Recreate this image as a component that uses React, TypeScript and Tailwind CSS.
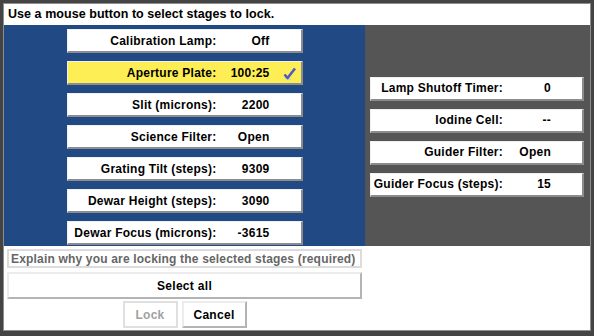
const font = { fontFamily: '"Liberation Sans", Arial, sans-serif' };

type Stage = { label: string; value: string; selected?: boolean };

const leftStages: Stage[] = [
  { label: 'Calibration Lamp:', value: 'Off' },
  { label: 'Aperture Plate:', value: '100:25', selected: true },
  { label: 'Slit (microns):', value: '2200' },
  { label: 'Science Filter:', value: 'Open' },
  { label: 'Grating Tilt (steps):', value: '9309' },
  { label: 'Dewar Height (steps):', value: '3090' },
  { label: 'Dewar Focus (microns):', value: '-3615' },
];

const rightStages: Stage[] = [
  { label: 'Lamp Shutoff Timer:', value: '0' },
  { label: 'Iodine Cell:', value: '--' },
  { label: 'Guider Filter:', value: 'Open' },
  { label: 'Guider Focus (steps):', value: '15' },
];

function Check() {
  return (
    <svg width="14" height="14" viewBox="0 0 14 14" className="absolute right-[4px] top-[5px]">
      <path d="M2 10.5 L8 12.5" stroke="#c8c8e0" strokeWidth="1.5" fill="none" />
      <path d="M1.5 7.5 L4.5 11 L12 1.5" stroke="#4b5cc4" strokeWidth="2.6" fill="none" strokeLinejoin="round" />
    </svg>
  );
}

function StageButton({ stage, wide }: { stage: Stage; wide: boolean }) {
  return (
    <div
      className={
        'relative flex h-[24px] items-center border-t border-l border-r-2 border-b-2 border-t-[#f0f0f0] border-l-[#f0f0f0] border-r-[#8c8c8c] border-b-[#8c8c8c] text-[12px] tracking-[0.25px] font-bold text-black ' +
        (wide ? 'w-[236px] ' : 'w-[214px] ') +
        (stage.selected ? 'bg-[#fdee55]' : 'bg-white')
      }
    >
      <div className={(wide ? 'w-[149px]' : 'w-[132px]') + ' text-right whitespace-nowrap'}>{stage.label}</div>
      <div className={(wide ? 'w-[53px]' : 'w-[48px]') + ' text-right whitespace-nowrap'}>{stage.value}</div>
      {stage.selected && <Check />}
    </div>
  );
}

export default function App() {
  return (
    <div className="w-[594px] h-[336px] bg-[#444] pt-[3px] pl-[3px] pr-[3px] pb-[5px]" style={font}>
      <div className="h-full border border-[#8e8e8e] bg-white flex flex-col">
        <div className="h-[21px] flex items-center pl-[4px] text-[12.5px] tracking-[0.05px] font-bold text-black">
          Use a mouse button to select stages to lock.
        </div>
        <div className="flex h-[221px]">
          <div className="w-[361px] bg-[#214a84] flex flex-col items-center gap-[8px] pt-[4px]">
            {leftStages.map((s) => (
              <StageButton key={s.label} stage={s} wide />
            ))}
          </div>
          <div className="flex-1 bg-[#555555] flex flex-col justify-center items-start pl-[5px] gap-[8px] pt-[2px]">
            {rightStages.map((s) => (
              <StageButton key={s.label} stage={s} wide={false} />
            ))}
          </div>
        </div>
        <div className="w-[358px] flex flex-col pl-[3px] pt-[3px]">
          <div className="h-[19px] border-2 border-[#dcdcdc] flex items-center pl-[2px] text-[12px] tracking-[0.18px] font-bold text-[#666] whitespace-nowrap overflow-hidden">
            Explain why you are locking the selected stages (required)
          </div>
          <button className="mt-[4px] h-[27px] border-t-2 border-l-2 border-r-2 border-b-2 border-t-[#ececec] border-l-[#ececec] border-r-[#b4b4b4] border-b-[#b4b4b4] bg-white text-[12px] tracking-[0.3px] font-bold text-black">
            Select all
          </button>
          <div className="flex justify-center gap-[4px] mt-[2px]">
            <button className="w-[55px] h-[27px] border-2 border-[#e0e0e0] bg-white text-[12px] tracking-[0.3px] font-bold text-[#a0a0a0]">
              Lock
            </button>
            <button className="w-[65px] h-[27px] border-t-2 border-l-2 border-r-2 border-b-2 border-t-[#ececec] border-l-[#ececec] border-r-[#b4b4b4] border-b-[#b4b4b4] bg-white text-[12px] tracking-[0.3px] font-bold text-black">
              Cancel
            </button>
          </div>
        </div>
      </div>
    </div>
  );
}
